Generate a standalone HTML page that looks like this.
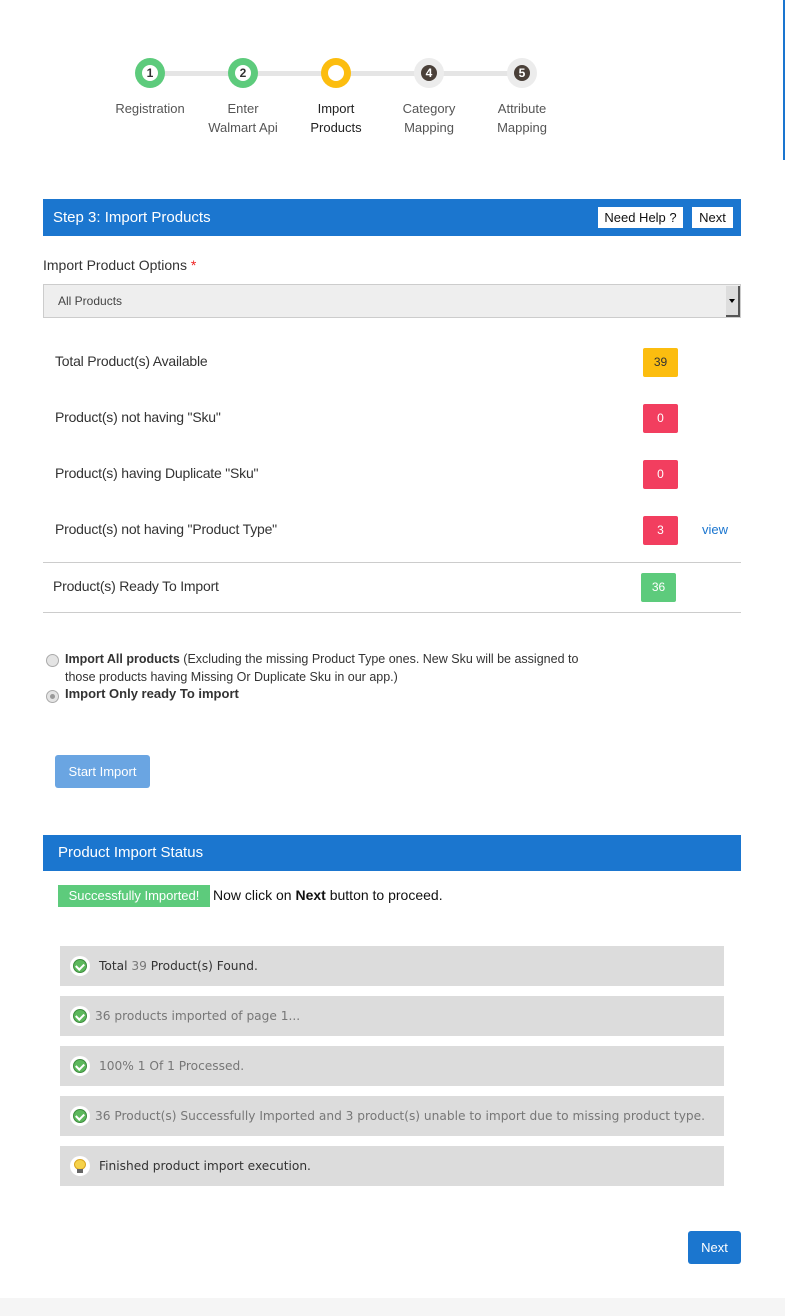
<!DOCTYPE html>
<html><head><meta charset="utf-8"><style>
*{box-sizing:border-box;margin:0;padding:0}
body{width:785px;height:1316px;position:relative;background:#fff;font-family:"Liberation Sans",sans-serif;color:#333;overflow:hidden}
.a{position:absolute}
.circ{position:absolute;width:30px;height:30px;border-radius:50%;}
.circ i{position:absolute;left:7px;top:7px;width:16px;height:16px;border-radius:50%;font-style:normal;font-size:12px;font-weight:bold;text-align:center;line-height:16px}
.lbl{position:absolute;width:100px;text-align:center;font-size:13px;line-height:19px;color:#555}
.row{position:absolute;left:55px;font-size:14px;color:#333;letter-spacing:-0.2px}
.badge{position:absolute;width:35px;height:29px;border-radius:2px;color:#fff;font-size:12px;text-align:center;line-height:29px}
.st{position:absolute;left:60px;width:664px;height:40px;background:#dcdcdc;font-family:"DejaVu Sans",sans-serif;font-size:12.2px;line-height:40px;color:#777}
.ic{position:absolute;left:10px;top:10px;width:20px;height:20px;border-radius:50%;background:#fff}
.ic b{position:absolute;left:3px;top:3px;width:14px;height:14px;border-radius:50%;background:#5cb85c;border:1px solid #3d8b3d}
.ic b:after{content:"";position:absolute;left:3px;top:2px;width:4px;height:6px;border:solid #fff;border-width:0 2px 2px 0;transform:rotate(45deg)}
.ic .bulb{position:absolute;left:4px;top:3px;width:12px;height:11px;border-radius:50%;background:#f6d24a;border:1px solid #d9a520}
.ic .base{position:absolute;left:7px;top:13px;width:6px;height:4px;background:#666}
</style></head><body>
<div class="a" style="left:783px;top:0;width:2px;height:160px;background:#1a75cf"></div>
<div class="a" style="left:0;top:1298px;width:785px;height:18px;background:#f5f5f5"></div>

<div class="a" style="left:150px;top:71px;width:372px;height:5px;background:#e5e5e5"></div>
<div class="circ" style="left:135px;top:58px;background:#5dcb7c"><i style="background:#fff;color:#333">1</i></div>
<div class="circ" style="left:228px;top:58px;background:#5dcb7c"><i style="background:#fff;color:#333">2</i></div>
<div class="circ" style="left:321px;top:58px;background:#fcbd0f"><i style="background:#fff"></i></div>
<div class="circ" style="left:414px;top:58px;background:#ececec"><i style="background:#4a4039;color:#fff">4</i></div>
<div class="circ" style="left:507px;top:58px;background:#ececec"><i style="background:#4a4039;color:#fff">5</i></div>
<div class="lbl" style="left:100px;top:99px">Registration</div>
<div class="lbl" style="left:193px;top:99px">Enter<br>Walmart Api</div>
<div class="lbl" style="left:286px;top:99px;color:#222">Import<br>Products</div>
<div class="lbl" style="left:379px;top:99px">Category<br>Mapping</div>
<div class="lbl" style="left:472px;top:99px">Attribute<br>Mapping</div>

<div class="a" style="left:43px;top:199px;width:698px;height:37px;background:#1b76cf;color:#fff;font-size:15px;line-height:37px;padding-left:10px">Step 3: Import Products</div>
<div class="a" style="left:598px;top:207px;width:85px;height:21px;background:#fff;color:#111;font-size:13px;text-align:center;line-height:21px">Need Help ?</div>
<div class="a" style="left:692px;top:207px;width:41px;height:21px;background:#fff;color:#111;font-size:13px;text-align:center;line-height:21px">Next</div>

<div class="a" style="left:43px;top:257px;font-size:14px;color:#333">Import Product Options <span style="color:#e22">*</span></div>
<div class="a" style="left:43px;top:284px;width:698px;height:34px;background:#eee;border:1px solid #ccc;font-size:12px;line-height:32px;padding-left:14px;color:#444">All Products</div>
<div class="a" style="left:726px;top:286px;width:14px;height:31px;background:#ddd;border-right:2px solid #555;border-bottom:2px solid #555"><div class="a" style="left:3px;top:13px;border:3px solid transparent;border-top:4px solid #000"></div></div>

<div class="row" style="top:353px">Total Product(s) Available</div>
<div class="badge" style="left:643px;top:348px;background:#fcbd0f;color:#333">39</div>
<div class="row" style="top:409px">Product(s) not having "Sku"</div>
<div class="badge" style="left:643px;top:404px;background:#f23e5f">0</div>
<div class="row" style="top:465px">Product(s) having Duplicate "Sku"</div>
<div class="badge" style="left:643px;top:460px;background:#f23e5f">0</div>
<div class="row" style="top:521px">Product(s) not having "Product Type"</div>
<div class="badge" style="left:643px;top:516px;background:#f23e5f">3</div>
<div class="a" style="left:702px;top:522px;font-size:13px;color:#1a75cf">view</div>
<div class="a" style="left:43px;top:562px;width:698px;height:1px;background:#ccc"></div>
<div class="row" style="left:53px;top:578px">Product(s) Ready To Import</div>
<div class="badge" style="left:641px;top:573px;background:#5dcb7c">36</div>
<div class="a" style="left:43px;top:612px;width:698px;height:1px;background:#ccc"></div>

<div class="a" style="left:46px;top:654px;width:13px;height:13px;border-radius:50%;background:#e4e4e4;border:1px solid #aaa"></div>
<div class="a" style="left:65px;top:650px;width:540px;font-size:12.5px;line-height:18px;color:#333"><b>Import All products</b> (Excluding the missing Product Type ones. New Sku will be assigned to those products having Missing Or Duplicate Sku in our app.)</div>
<div class="a" style="left:46px;top:690px;width:13px;height:13px;border-radius:50%;background:#e4e4e4;border:1px solid #aaa"><div class="a" style="left:3px;top:3px;width:5px;height:5px;border-radius:50%;background:#999"></div></div>
<div class="a" style="left:65px;top:686px;font-size:13px;font-weight:bold;color:#333">Import Only ready To import</div>

<div class="a" style="left:55px;top:755px;width:95px;height:33px;background:#6aa5e2;border-radius:3px;color:#fff;font-size:13px;text-align:center;line-height:33px">Start Import</div>

<div class="a" style="left:43px;top:835px;width:698px;height:36px;background:#1b76cf;color:#fff;font-size:15px;line-height:36px;padding-left:15px">Product Import Status</div>
<div class="a" style="left:58px;top:885px;width:152px;height:22px;background:#5dcb7c;color:#fff;font-size:13px;text-align:center;line-height:22px">Successfully Imported!</div>
<div class="a" style="left:213px;top:887px;font-size:14px;color:#111">Now click on <b>Next</b> button to proceed.</div>

<div class="st" style="top:946px"><span class="ic"><b></b></span><span style="position:absolute;left:39px;color:#333">Total <span style="color:#777">39</span> Product(s) Found.</span></div>
<div class="st" style="top:996px"><span class="ic"><b></b></span><span style="position:absolute;left:35px">36 products imported of page 1...</span></div>
<div class="st" style="top:1046px"><span class="ic"><b></b></span><span style="position:absolute;left:39px">100% 1 Of 1 Processed.</span></div>
<div class="st" style="top:1096px"><span class="ic"><b></b></span><span style="position:absolute;left:35px">36 Product(s) Successfully Imported and 3 product(s) unable to import due to missing product type.</span></div>
<div class="st" style="top:1146px"><span class="ic"><span class="bulb"></span><span class="base"></span></span><span style="position:absolute;left:39px;color:#333">Finished product import execution.</span></div>

<div class="a" style="left:688px;top:1231px;width:53px;height:33px;background:#1b76cf;border-radius:3px;color:#fff;font-size:13px;text-align:center;line-height:33px">Next</div>
</body></html>
